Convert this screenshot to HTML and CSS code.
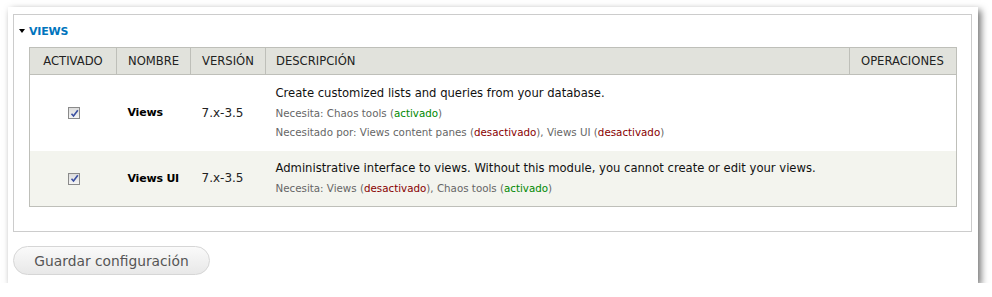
FILE: index.html
```html
<!DOCTYPE html>
<html>
<head>
<meta charset="utf-8">
<link rel="stylesheet" href="styles.css">
</head>
<body>
<div class="card">
  <fieldset class="group">
    <legend class="legend"><span class="tri"></span>VIEWS</legend>
    <table class="modules">
      <colgroup>
        <col class="w-act">
        <col class="w-name">
        <col class="w-ver">
        <col class="w-desc">
        <col class="w-ops">
      </colgroup>
      <thead>
        <tr>
          <th class="c-act">ACTIVADO</th>
          <th>NOMBRE</th>
          <th>VERSIÓN</th>
          <th class="c-desc">DESCRIPCIÓN</th>
          <th>OPERACIONES</th>
        </tr>
      </thead>
      <tbody>
        <tr class="odd">
          <td class="c-act"><span class="cb"><svg viewBox="0 0 9 9" width="9" height="9"><path d="M1.5 4.8 L3.5 7 L7.8 1.2" fill="none" stroke="#3a4fa0" stroke-width="1.6"/></svg></span></td>
          <td class="c-name"><strong>Views</strong></td>
          <td class="c-ver">7.x-3.5</td>
          <td class="c-desc">
            <div class="desc">Create customized lists and queries from your database.</div>
            <div class="req">Necesita: Chaos tools (<span class="on">activado</span>)</div>
            <div class="req">Necesitado por: Views content panes (<span class="off">desactivado</span>), Views UI (<span class="off">desactivado</span>)</div>
          </td>
          <td class="c-ops"></td>
        </tr>
        <tr class="even">
          <td class="c-act"><span class="cb"><svg viewBox="0 0 9 9" width="9" height="9"><path d="M1.5 4.8 L3.5 7 L7.8 1.2" fill="none" stroke="#3a4fa0" stroke-width="1.6"/></svg></span></td>
          <td class="c-name"><strong>Views UI</strong></td>
          <td class="c-ver">7.x-3.5</td>
          <td class="c-desc">
            <div class="desc">Administrative interface to views. Without this module, you cannot create or edit your views.</div>
            <div class="req">Necesita: Views (<span class="off">desactivado</span>), Chaos tools (<span class="on">activado</span>)</div>
          </td>
          <td class="c-ops"></td>
        </tr>
      </tbody>
    </table>
  </fieldset>
  <div class="actions">
    <button class="save" type="button">Guardar configuración</button>
  </div>
</div>
</body>
</html>
```

FILE: styles.css
```css
html, body {
  margin: 0;
  padding: 0;
  background: #ffffff;
}
body {
  font-family: "DejaVu Sans", Verdana, sans-serif;
  color: #333;
}
.card {
  margin: 7px 0 0 8px;
  width: 970px;
  height: 276px;
  box-sizing: border-box;
  background: #fff;
  box-shadow: 3px 3px 7px rgba(0,0,0,0.55);
  padding: 7px 6px 0 5px;
}
.group {
  margin: 0;
  border: 1px solid #cccccc;
  padding: 0 14px 23px 15px;
  height: 218px;
  box-sizing: border-box;
}
.legend {
  display: block;
  float: left;
  width: 100%;
  padding: 10px 0 0 0;
  margin: 0 0 0 -10px;
  height: 22px;
  font-size: 11px;
  font-weight: bold;
  color: #0074bd;
  letter-spacing: -0.2px;
}
.tri {
  display: inline-block;
  width: 0;
  height: 0;
  border-left: 3.5px solid transparent;
  border-right: 3.5px solid transparent;
  border-top: 4px solid #000;
  margin: 0 4px 2px 0;
  vertical-align: middle;
}
.modules {
  clear: both;
  width: 928px;
  table-layout: fixed;
  border-collapse: collapse;
  border: 1px solid #bebfb9;
  font-size: 11px;
}
.w-act { width: 87px; }
.w-name { width: 74px; }
.w-ver { width: 75px; }
.w-ops { width: 107px; }
.modules th {
  background: #e1e2dc;
  border: 1px solid #bebfb9;
  font-weight: normal;
  text-align: left;
  height: 26px;
  padding: 0 11px;
  color: #222;
  font-size: 11.6px;
  white-space: nowrap;
}
.modules td {
  padding: 0 11px;
  vertical-align: middle;
  color: #222;
}
.modules .c-act { text-align: center; }
.modules .c-desc { padding-left: 10px; }
.odd { background: #fff; height: 76px; }
.even { background: #f3f4ee; height: 56px; }
.cb {
  display: inline-flex;
  align-items: center;
  justify-content: center;
  width: 10px;
  height: 10px;
  border: 1px solid #8a8a8a;
  background: linear-gradient(#dcdcdc, #f4f4f4);
  vertical-align: middle;
  margin-left: 2px;
}
.c-name { white-space: nowrap; }
.c-name strong { color: #000; font-weight: bold; font-size: 11px; letter-spacing: -0.2px; }
.c-ver { font-size: 12px; }
.desc { font-size: 11.6px; line-height: 15px; margin-bottom: 5px; color: #111; }
.req { font-size: 10.3px; line-height: 14px; color: #666; margin-bottom: 5px; }
.req:last-child { margin-bottom: 0; }
.on { color: #008800; }
.off { color: #880000; }
.actions {
  padding-top: 14px;
}
.save {
  margin: 0;
  width: 197px;
  height: 29px;
  border-radius: 15px;
  border: 1px solid #d6d6d6;
  background: linear-gradient(#fafafa, #e8e8e8);
  color: #555;
  font-family: "DejaVu Sans", Verdana, sans-serif;
  font-size: 13.8px;
  padding: 0;
}
```
